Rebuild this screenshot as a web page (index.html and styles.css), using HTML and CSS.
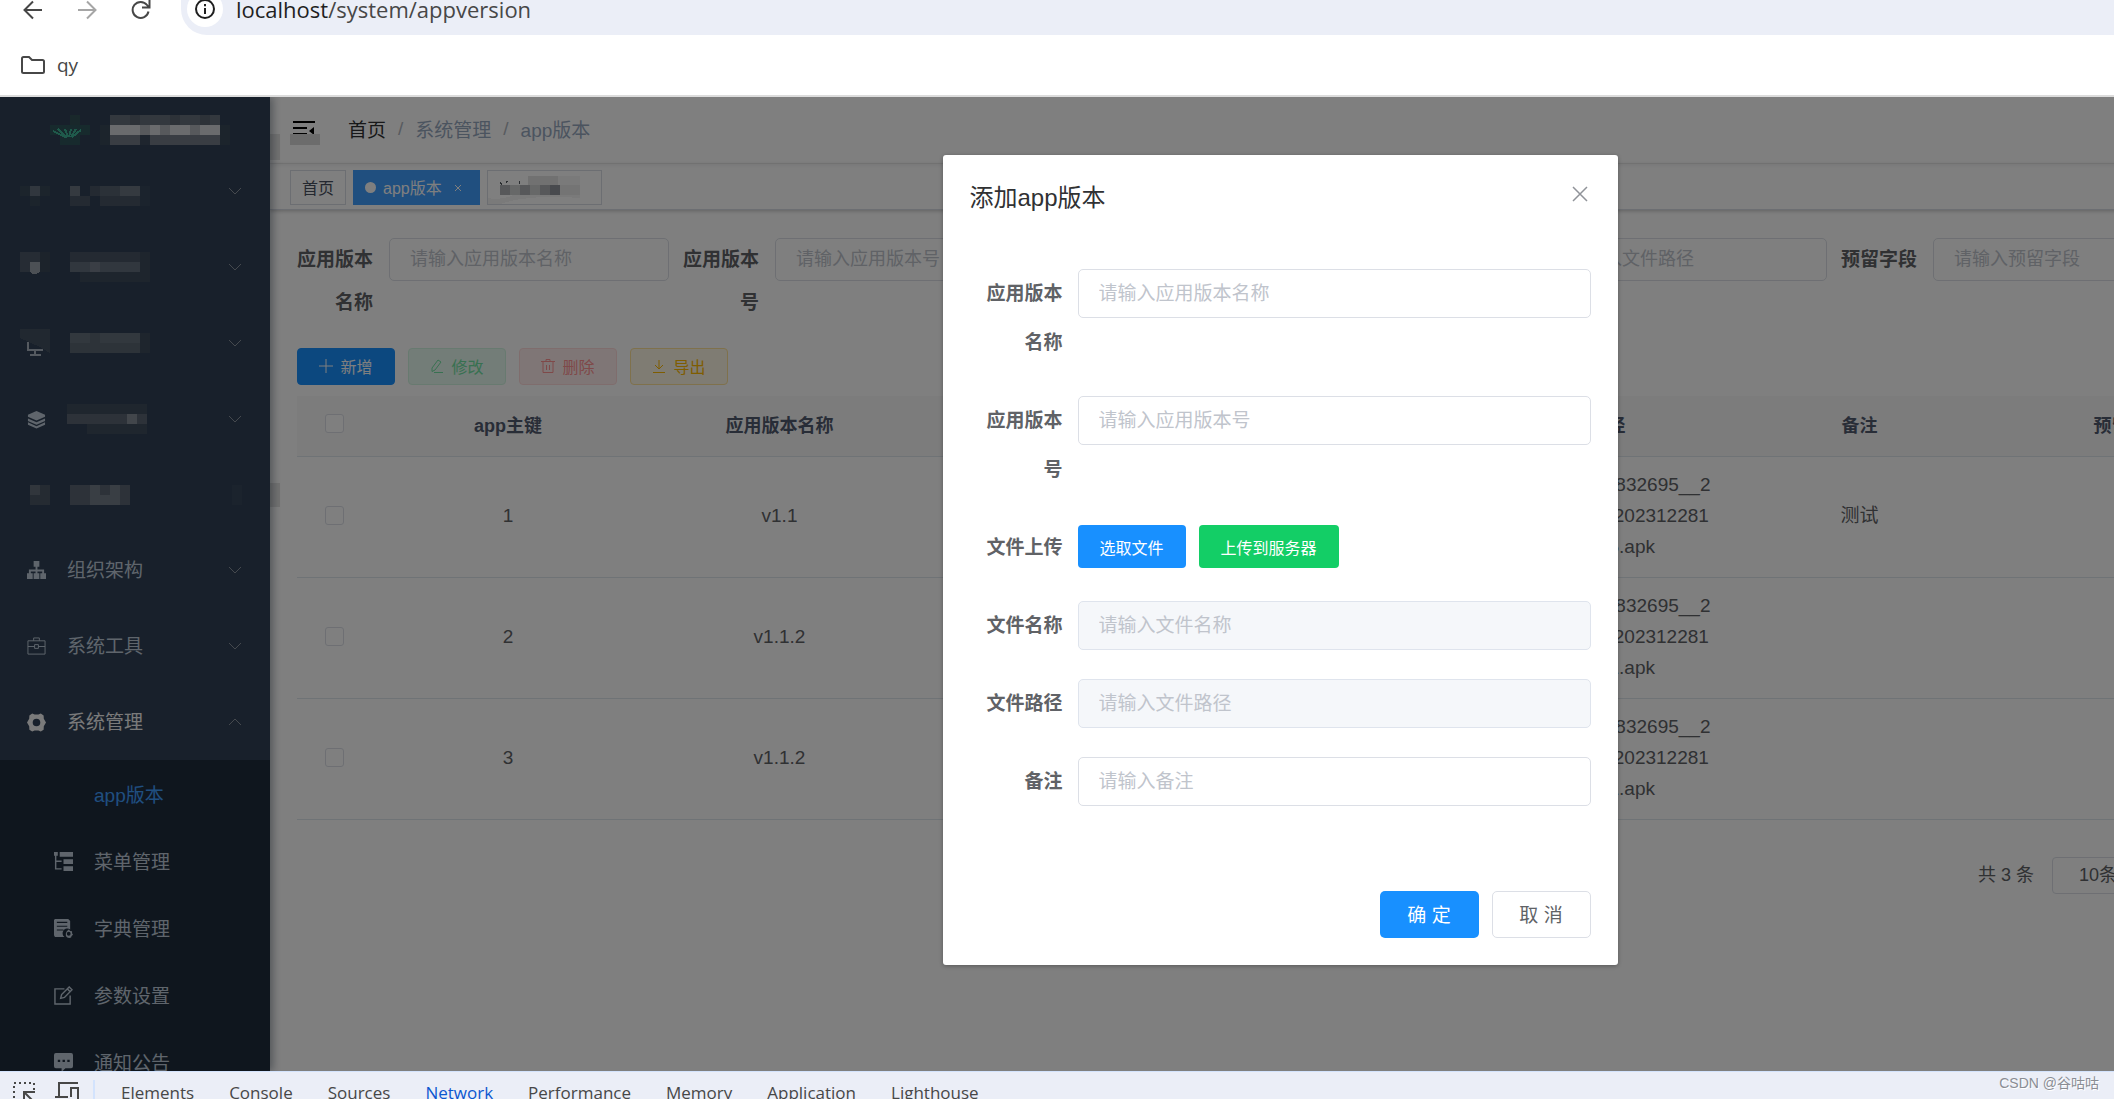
FILE: index.html
```html
<!DOCTYPE html>
<html lang="zh-CN">
<head>
<meta charset="utf-8">
<title>app版本</title>
<link rel="stylesheet" href="styles.css">
</head>
<body>
<header class="browser">
  <div class="toolbar">
    <button class="nav-btn" aria-label="Back"><svg viewBox="0 0 20 20" width="20" height="20"><path d="M19 10H2M10 1.500L1.500 10l8.500 8.500"/></svg></button>
    <button class="nav-btn nav-off" aria-label="Forward" disabled><svg viewBox="0 0 20 20" width="20" height="20"><path d="M1 10h17M10 1.500l8.500 8.500-8.500 8.500"/></svg></button>
    <button class="nav-btn" aria-label="Reload"><svg viewBox="0 0 20 20" width="20" height="20"><path d="M17.500 11.500A8 8 0 1 1 16 5l2 2.500M18.500 0v7.500H11"/></svg></button>
    <div class="address">
      <span class="site-info"><svg viewBox="0 0 22 22" width="22" height="22"><circle cx="11" cy="11" r="9"/><path d="M11 10v6M11 6v2.200"/></svg></span>
      <span class="url"><b>localhost</b>/system/appversion</span>
    </div>
  </div>
  <div class="bookmarks">
    <a class="bookmark" href="#"><svg viewBox="0 0 26 20" width="26" height="20"><path d="M2 3.500Q2 2 3.500 2H9l3 3h10.500Q24 5 24 6.500v10q0 1.500-1.500 1.500h-19Q2 18 2 16.500z"/></svg>qy</a>
  </div>
</header>

<div class="viewport">
<div class="app">
  <aside class="sidebar">
    <div class="logo">
      <svg class="mosaic" viewBox="0 0 40 30" width="40" height="30">
        <path fill="#325056" d="M20 0h10v10H20z"/><path fill="#2f5a5c" d="M0 10h40v10H0zM10 20h20v10H10z" opacity=".8"/>
        <path class="leaf" d="M3 16l12 6M8 14l9 9M15 14l3 8M21 14l-2 8M26 14l-5 8M31 15l-9 7"/>
      </svg>
      <svg class="mosaic" viewBox="0 0 130 30" width="130" height="30">
        <path fill="#66707c" d="M10 0h110v10H10z"/><path fill="#5a6470" d="M30 0h10v10H30zM70 0h10v10H70zM100 0h10v10h-10z"/>
        <path fill="#d4d6da" d="M10 10h110v10H10z"/><path fill="#aeb2b8" d="M40 10h10v10H40zM60 10h10v10H60zM90 10h10v10H90z"/>
        <path fill="#737b86" d="M10 20h110v10H10z"/><path fill="#3c4a5c" d="M40 20h10v10H40z"/><path fill="#384859" d="M0 10h10v20H0zM120 10h10v20h-10z"/>
      </svg>
    </div>
    <nav class="menu">
      <a class="item blurred" href="#" aria-label="菜单一">
        <svg class="mosaic" viewBox="0 -10 30 30" width="30" height="30"><path fill="#384859" d="M0 0h30v10H10v10h10V10H0z"/><path fill="#626e7c" d="M10 0h10v10H10z"/></svg>
        <svg class="mosaic" viewBox="0 0 80 30" width="80" height="30"><path fill="#566370" d="M20 10h50v10H20z"/><path fill="#485564" d="M20 10h10v10H20zM30 20h40v10H30zM0 20h20v10H0z"/><path fill="#6a7480" d="M0 10h10v10H0zM50 10h20v10H50z" transform="translate(0 0)"/><path fill="#36475a" d="M70 10h10v20H70z"/></svg>
        <svg class="chevron" viewBox="0 0 14 8"><path d="M1 1l6 6 6-6"/></svg></a>
      <a class="item blurred" href="#" aria-label="菜单二">
        <svg class="mosaic" viewBox="0 0 30 30" width="30" height="30"><path fill="#4c5968" d="M0 0h20v20H0z"/><path fill="#384757" d="M20 0h10v20H20z"/><path fill="#98a0aa" d="M10 10h10v10q-6 4-10 0z"/></svg>
        <svg class="mosaic" viewBox="0 0 80 30" width="80" height="30"><path fill="#485564" d="M0 0h80v20H0z"/><path fill="#626e7c" d="M0 10h70v10H0z"/><path fill="#747c8a" d="M20 10h10v10H20z"/><path fill="#3c4a5a" d="M10 20h70v10H10zM70 0h10v20H70z"/></svg>
        <svg class="chevron" viewBox="0 0 14 8"><path d="M1 1l6 6 6-6"/></svg></a>
      <a class="item blurred" href="#" aria-label="菜单三">
        <svg class="mosaic" viewBox="0 0 30 30" width="30" height="30"><path fill="#425060" d="M0 1h30v24l-10-6L0 10z"/><path fill="none" stroke="#aab4c0" stroke-width="1.500" d="M8 14v8h15M15 22v5M10 27h11"/></svg>
        <svg class="mosaic" viewBox="0 0 80 20" width="80" height="20"><path fill="#65707c" d="M0 0h70v10H0z"/><path fill="#5b6672" d="M0 10h70v10H0zM20 0h10v10H20z"/><path fill="#3c4a5a" d="M70 0h10v20H70z"/></svg>
        <svg class="chevron" viewBox="0 0 14 8"><path d="M1 1l6 6 6-6"/></svg></a>
      <a class="item blurred" href="#" aria-label="菜单四">
        <svg class="icon" viewBox="0 0 20 20"><path d="M10 1l9 4v2l-9 4-9-4V5z"/><path d="M1 9l9 4 9-4v2.500l-9 4-9-4zM1 13l9 4 9-4v2.500l-9 4-9-4z"/></svg>
        <svg class="mosaic" viewBox="0 0 80 30" width="80" height="30"><path fill="#3e4c5c" d="M0 0h80v10H0zM20 20h60v10H20z"/><path fill="#5b6572" d="M0 10h80v10H0z"/><path fill="#848c96" d="M60 10h10v10H60z"/></svg>
        <svg class="chevron" viewBox="0 0 14 8"><path d="M1 1l6 6 6-6"/></svg></a>
      <a class="item blurred" href="#" aria-label="菜单五">
        <svg class="mosaic" viewBox="0 0 30 20" width="30" height="20"><path fill="#626c78" d="M10 0h10v10H10z"/><path fill="#4a5664" d="M20 0h10v20H10V10h10z"/></svg>
        <svg class="mosaic" viewBox="0 0 80 20" width="80" height="20"><path fill="#5b6572" d="M0 0h60v20H0z"/><path fill="#737c88" d="M20 0h10v20H20zM40 0h10v20H30V10h10z"/></svg>
        <svg class="mosaic mosaic-end" viewBox="0 0 10 20" width="10" height="20"><path fill="#36475a" d="M0 0h10v20H0z"/></svg></a>
      <a class="item" href="#">
        <svg class="icon" viewBox="0 0 20 20"><path d="M7 0h6v6h-2v3h7v4h2v6h-6v-6h2v-2h-5v2h2v6H7v-6h2v-2H4v2h2v6H0v-6h2V9h7V6H7z"/></svg>
        <span class="name">组织架构</span><svg class="chevron" viewBox="0 0 14 8"><path d="M1 1l6 6 6-6"/></svg></a>
      <a class="item" href="#">
        <svg class="icon line thin" viewBox="0 0 20 20"><path d="M1 4h18v14H1zM7 4V1h6v3M1 10h7M12 10h7M8 8h4v4H8z"/></svg>
        <span class="name">系统工具</span><svg class="chevron" viewBox="0 0 14 8"><path d="M1 1l6 6 6-6"/></svg></a>
      <a class="item open" href="#">
        <svg class="icon" viewBox="0 0 20 20"><path fill-rule="evenodd" d="M5.500.500L8 1.500h4l2.500-1 3 2 .200 3.500L20 10l-2.300 4-.200 3.500-3 2-2.500-1H8l-2.500 1-3-2-.200-3.500L0 10l2.300-4 .200-3.500zM10 6a4 4 0 1 0 0 8 4 4 0 0 0 0-8z"/></svg>
        <span class="name">系统管理</span><svg class="chevron" viewBox="0 0 14 8"><path d="M1 7l6-6 6 6"/></svg></a>
      <div class="submenu">
        <a class="subitem current" href="#"><span class="icon"></span><span class="name">app版本</span></a>
        <a class="subitem" href="#"><svg class="icon" viewBox="0 0 20 20"><path d="M0 0h4v4H0zM6 0h14v5H6zM10 7.500h10v5H10zM10 15h10v5H10zM1 4h1.500v5H8v1.500H2.500V17H8v1.500H1z"/></svg><span class="name">菜单管理</span></a>
        <a class="subitem" href="#"><svg class="icon" viewBox="0 0 20 20"><path fill-rule="evenodd" d="M1 0h14l2 2v9a5 5 0 0 0-6 8H1L0 17V1zM3 3v1.200h11V3zM3 7v1.200h11V7zM3 11v1.200h7V11z"/><path fill-rule="evenodd" d="M15.500 11l1.500 1.500 2 .500v2l1 1.500-1.500 1.500-.500 1.500-2 .500-2-.500-1.500-1.500v-3l1-2zM15.500 13.500a2 2 0 1 0 0 4 2 2 0 0 0 0-4z"/></svg><span class="name">字典管理</span></a>
        <a class="subitem" href="#"><svg class="icon line" viewBox="0 0 20 20"><path d="M11 3H1v16h16v-9M7 13l1-4 8-8 3 3-8 8zM14 3l3 3"/></svg><span class="name">参数设置</span></a>
        <a class="subitem" href="#"><svg class="icon" viewBox="0 0 20 20"><path fill-rule="evenodd" d="M2 0h16q2 0 2 2v12q0 2-2 2h-6l-4 4v-4H2q-2 0-2-2V2q0-2 2-2zM4 7v2.500h2.500V7zM9 7v2.500h2.500V7zM14 7v2.500h2.500V7z"/></svg><span class="name">通知公告</span></a>
      </div>
    </nav>
  </aside>

  <main class="main">
    <div class="navbar">
      <button class="fold" aria-label="收起菜单"><svg viewBox="0 0 22 16" width="22" height="16"><path d="M0 0h22v2H0zM0 6h14v2H0zM0 12h14v2H0zM21 6v8l-5-4z"/></svg></button>
      <nav class="crumbs"><a href="#">首页</a><i>/</i><span>系统管理</span><i>/</i><span>app版本</span></nav>
    </div>
    <div class="tags">
      <a class="tag" href="#">首页</a>
      <a class="tag active" href="#"><span class="dot"></span>app版本<svg class="tag-x" viewBox="0 0 8 8" width="8" height="8"><path d="M1 1l6 6M7 1L1 7"/></svg></a>
      <a class="tag hidden-name" href="#" aria-label="标签"><svg class="mosaic" viewBox="0 0 106 33" width="106" height="33"><path fill="#f4f4f4" d="M0 27q18 4 38-10l30-12h24v22q-50-4-80 6H0z"/><path fill="#555a60" d="M12 11l2 2-1 1-2-2zM18 10h2l-2 3zM31 10h1v3h-1z"/><path fill="#e3e3e3" d="M40 5h30v9H40z"/><path fill="#cfd0d1" d="M12 14h60v10H12z"/><path fill="#aeb0b4" d="M12 14h10v10H12zM32 14h10v10H32zM52 14h10v10H52z"/><path fill="#90949c" d="M62 14h10v10H62z"/><path fill="#e8e8e8" d="M72 14h20v10H72z"/></svg></a>
    </div>

    <section class="content">
      <form class="query">
        <div class="field"><label for="q1">应用版本名称</label><input id="q1" placeholder="请输入应用版本名称"></div>
        <div class="field"><label for="q2">应用版本号</label><input id="q2" placeholder="请输入应用版本号"></div>
        <div class="field"><label for="q3">文件名称</label><input id="q3" placeholder="请输入文件名称"></div>
        <div class="field"><label for="q4">文件路径</label><input id="q4" placeholder="请输入文件路径"></div>
        <div class="field"><label for="q5">预留字段</label><input id="q5" placeholder="请输入预留字段"></div>
      </form>
      <div class="actions">
        <button class="btn add"><svg viewBox="0 0 14 14" width="14" height="14"><path d="M7 0v14M0 7h14"/></svg>新增</button>
        <button class="btn edit" disabled><svg viewBox="0 0 14 14" width="14" height="14"><path d="M2 9l6-8 3 2-6 8-3 1.500zM4 13.500h9"/></svg>修改</button>
        <button class="btn del" disabled><svg viewBox="0 0 14 14" width="14" height="14"><path d="M0 2.500h14M5 2.500v-2h4v2M2 2.500v11h10v-11M5.500 6v5M8.500 6v5"/></svg>删除</button>
        <button class="btn export"><svg viewBox="0 0 14 14" width="14" height="14"><path d="M7 1v9M3 6l4 4 4-4M1 13.500h12"/></svg>导出</button>
      </div>
      <table class="grid">
        <colgroup><col class="col-check"><col><col><col><col><col><col><col><col></colgroup>
        <thead><tr><th><input type="checkbox" aria-label="全选"></th><th>app主键</th><th>应用版本名称</th><th>应用版本号</th><th>文件名称</th><th>文件路径</th><th>备注</th><th>预留字段</th><th>操作</th></tr></thead>
        <tbody>
          <tr><td><input type="checkbox" aria-label="选择 1"></td><td>1</td><td>v1.1</td><td></td><td></td><td>/profile/20231703832695__2<br>UNI__20231228/202312281<br>202312285.apk</td><td>测试</td><td></td><td></td></tr>
          <tr><td><input type="checkbox" aria-label="选择 2"></td><td>2</td><td>v1.1.2</td><td></td><td></td><td>/profile/20231703832695__2<br>UNI__20231228/202312281<br>202312281.apk</td><td></td><td></td><td></td></tr>
          <tr><td><input type="checkbox" aria-label="选择 3"></td><td>3</td><td>v1.1.2</td><td></td><td></td><td>/profile/20231703832695__2<br>UNI__20231228/202312281<br>202312281.apk</td><td></td><td></td><td></td></tr>
        </tbody>
      </table>
      <div class="pager">
        <span class="total">共 3 条</span>
        <select aria-label="每页条数"><option>10条/页</option></select>
        <div class="pages"><button aria-label="上一页">‹</button><button>1</button><button aria-label="下一页">›</button></div>
        <label class="jump">前往 <input value="1"> 页</label>
      </div>
    </section>
    <span class="smudge smudge-top"></span>
    <span class="smudge smudge-fold"></span>
    <span class="smudge smudge-mid"></span>
  </main>

  <div class="mask">
    <form class="dialog" role="dialog" aria-labelledby="dlg-title">
      <div class="dialog-head">
        <h2 id="dlg-title">添加app版本</h2>
        <button type="button" class="close" aria-label="关闭"><svg viewBox="0 0 16 16" width="16" height="16"><path d="M1 1l14 14M15 1L1 15"/></svg></button>
      </div>
      <div class="dialog-body">
        <div class="row"><label for="f1">应用版本名称</label><input id="f1" placeholder="请输入应用版本名称"></div>
        <div class="row"><label for="f2">应用版本号</label><input id="f2" placeholder="请输入应用版本号"></div>
        <div class="row"><span class="row-label">文件上传</span><div class="uploads"><button type="button" class="pick">选取文件</button><button type="button" class="send">上传到服务器</button></div></div>
        <div class="row"><label for="f3">文件名称</label><input id="f3" placeholder="请输入文件名称" disabled></div>
        <div class="row"><label for="f4">文件路径</label><input id="f4" placeholder="请输入文件路径" disabled></div>
        <div class="row"><label for="f5">备注</label><input id="f5" placeholder="请输入备注"></div>
      </div>
      <div class="dialog-foot"><button type="button" class="ok">确 定</button><button type="button" class="cancel">取 消</button></div>
    </form>
  </div>
</div>
</div>

<footer class="devtools">
  <button class="tool" aria-label="Inspect"><svg viewBox="0 0 22 22" width="22" height="22"><path stroke-dasharray="2 3" d="M1 22V2h20v8"/><path d="M22 22L11 11M11 20v-9h11"/></svg></button>
  <button class="tool" aria-label="Device"><svg viewBox="0 0 24 22" width="24" height="22"><path d="M23 2H4v14H0M16 16V7h7v12h-7M13 16H0"/></svg></button>
  <nav class="panels"><a href="#">Elements</a><a href="#">Console</a><a href="#">Sources</a><a href="#" class="on">Network</a><a href="#">Performance</a><a href="#">Memory</a><a href="#">Application</a><a href="#">Lighthouse</a></nav>
  <span class="credit">CSDN @谷咕咕</span>
</footer>
</body>
</html>
```
FILE: styles.css
```css
* { box-sizing: border-box; }
html, body { height: 100%; margin: 0; }
body {
  display: flex; flex-direction: column; overflow: hidden; background: #fff;
  font-family: "Liberation Sans", "Noto Sans CJK SC", sans-serif; font-size: 19px; color: #606266;
}
a { color: inherit; text-decoration: none; }
button, input, select { font: inherit; margin: 0; }
button { padding: 0; border: 0; background: none; color: inherit; }
svg { display: block; flex: none; }

/* browser frame */
.browser { flex: none; border-bottom: 2px solid #dcdcdc; font-family: "Open Sans", "Noto Sans", sans-serif; color: #474747; }
.toolbar { display: flex; align-items: center; gap: 34px; height: 35px; padding: 0 0 0 23px; }
.nav-btn { margin-bottom: 16px; }
.nav-btn svg, .site-info svg, .bookmark svg { fill: none; stroke: #474747; stroke-width: 2; }
.nav-off svg { stroke: #a6a6a6; }
.address { flex: 1; display: flex; align-items: center; gap: 13px; height: 35px; margin-left: -4px; padding: 0 0 17px 6px; background: #ebeef7; border-radius: 0 0 0 26px; }
.site-info { display: flex; align-items: center; justify-content: center; width: 36px; height: 36px; border-radius: 18px; background: #fff; flex: none; }
.site-info svg { stroke: #1f1f1f; }
.url { font-size: 22px; line-height: 18px; }
.url b { font-weight: 400; color: #1f1f1f; }
.bookmarks { display: flex; align-items: center; height: 60px; padding-left: 20px; }
.bookmark { display: flex; align-items: center; gap: 11px; font-size: 19px; }

/* application shell */
.viewport { flex: 1; min-height: 0; overflow: hidden; }
.app { position: relative; display: flex; height: 100%; min-width: 2560px; }
.sidebar { position: relative; z-index: 1; flex: none; width: 270px; overflow: hidden; background: #304156; color: #bfcbd9; box-shadow: 3px 0 8px rgba(0, 21, 41, .35); }
.logo { display: flex; align-items: center; gap: 10px; height: 55px; padding: 11px 0 0 50px; }
.leaf { fill: none; stroke: #3fb497; stroke-width: 2; }
.item { display: flex; align-items: center; height: 76px; padding: 0 28px 0 20px; gap: 20px; }
.blurred { padding-top: 2px; }
.icon { width: 19px; height: 19px; flex: none; fill: currentColor; margin: 0 1px 0 7px; }
.line { fill: none; stroke: currentColor; stroke-width: 1.5; }
.thin { stroke-width: 1; }
.name { padding-bottom: 3px; }
.chevron { width: 14px; height: 8px; margin-left: auto; fill: none; stroke: #8a929c; stroke-width: 1; }
.mosaic { shape-rendering: crispEdges; }
.mosaic-end { margin-left: auto; }
.open { color: #f4f4f5; }
.submenu { padding-top: 1px; background: #1f2d3d; }
.subitem { display: flex; align-items: center; gap: 20px; height: 67px; padding-left: 47px; }
.current { color: #409eff; }

.main { position: relative; flex: 1; min-width: 0; background: #fff; }
.navbar { display: flex; align-items: center; gap: 33px; height: 67px; padding: 0 0 3px 23px; border-bottom: 1px solid #f0f0f0; box-shadow: 0 1px 4px rgba(0, 21, 41, .08); }
.fold svg { fill: #000; }
.crumbs { display: flex; align-items: center; color: #97a8be; }
.crumbs a { color: #303133; }
.crumbs i { margin: 0 12px; font-style: normal; color: #b0b6c0; }
.tags { display: flex; align-items: center; gap: 7px; height: 46px; padding: 1px 0 0 20px; border-bottom: 1px solid #d8dce5; box-shadow: 0 1px 4px rgba(0, 0, 0, .24); font-size: 16px; color: #495060; }
.tag { display: flex; align-items: center; height: 35px; padding: 0 11px; border: 1px solid #d8dce5; }
.active { background: #409eff; border-color: #409eff; color: #fff; }
.dot { width: 11px; height: 11px; margin-right: 7px; border-radius: 50%; background: #fff; }
.tag-x { margin: 2px 6px 0 12px; fill: none; stroke: #fff; }
.hidden-name { width: 115px; padding: 0; overflow: hidden; }

.content { padding: 28px 27px; }
.query { display: flex; gap: 14px; margin-bottom: 24px; }
.field { display: flex; align-items: flex-start; }
.field label { width: 92px; padding-right: 16px; line-height: 43px; text-align: right; font-weight: 700; }
.field input { width: 280px; height: 43px; font-size: 18px; }
.field input, .row input { padding: 0 20px; border: 1px solid #dcdfe6; border-radius: 5px; background: #fff; color: #606266; }
input::placeholder { color: #c0c4cc; opacity: 1; }
.actions { display: flex; gap: 13px; margin-bottom: 11px; }
.btn { display: flex; align-items: center; justify-content: center; gap: 7px; width: 98px; height: 37px; padding-bottom: 2px; border: 1px solid; border-radius: 4px; font-size: 16px; }
.btn svg { fill: none; stroke: currentColor; }
.add { background: #1890ff; border-color: #1890ff; color: #fff; }
.edit { background: #e7faf0; border-color: #d0f5e0; color: #71e2a3; }
.del { background: #ffeded; border-color: #ffdbdb; color: #ff9292; }
.export { background: #fff8e6; border-color: #ffe399; color: #ffba00; }

.grid { width: 100%; table-layout: fixed; border-collapse: collapse; }
.col-check { width: 76px; }
.grid th { height: 60px; padding: 0 0 4px; border-bottom: 1px solid #dfe6ec; background: #f8f8f9; color: #515a6e; font-size: 18px; }
.grid td { height: 121px; padding: 0 0 2px; border-bottom: 1px solid #dfe6ec; text-align: center; line-height: 31px; white-space: nowrap; }
.grid input { display: block; appearance: none; width: 19px; height: 19px; margin: 0 auto; border: 1px solid #dcdfe6; border-radius: 3px; background: #fff; }
.grid th:first-child, .grid td:first-child { padding-right: 2px; }
.grid th:nth-child(n+3), .grid td:nth-child(n+3) { padding-left: 3px; }
.pager { display: flex; align-items: center; justify-content: flex-end; gap: 14px; margin-top: 37px; font-size: 18px; }
.total { margin-right: 4px; padding-bottom: 4px; }
.pager select { width: 135px; height: 37px; padding: 0 0 0 26px; appearance: none; border: 1px solid #dcdfe6; border-radius: 4px; background: #fff; color: #606266; }
.pages { display: flex; gap: 7px; }
.pages button { width: 40px; height: 37px; background: #f4f4f5; }
.jump { width: 184px; white-space: nowrap; }
.jump input { width: 60px; height: 37px; border: 1px solid #dcdfe6; text-align: center; }

.smudge { position: absolute; background: #e4e4e4; }
.smudge-top { left: 0; top: 37px; width: 10px; height: 26px; }
.smudge-fold { left: 20px; top: 37px; width: 30px; height: 11px; background: #d8d8d8; }
.smudge-mid { left: 0; top: 386px; width: 10px; height: 24px; }

/* dialog */
.mask { position: absolute; inset: 0; z-index: 2; display: flex; justify-content: center; align-items: flex-start; padding-top: 58px; background: rgba(0, 0, 0, .5); }
.dialog { width: 675px; padding: 27px; border-radius: 3px; background: #fff; box-shadow: 0 1px 4px rgba(0, 0, 0, .3); }
.dialog-head { display: flex; align-items: flex-start; justify-content: space-between; height: 87px; }
.dialog-head h2 { margin: 0; font-size: 24px; font-weight: 400; line-height: 32px; color: #303133; }
.close { padding: 4px 3px; }
.close svg { fill: none; stroke: #909399; stroke-width: 1.5; }
.row { display: flex; align-items: flex-start; margin-bottom: 29px; }
.row label, .row-label { width: 108px; padding: 0 15px 0 14px; line-height: 49px; text-align: right; font-weight: 700; flex: none; }
.row input { flex: 1; min-width: 0; height: 49px; }
.row input:disabled { background: #f5f7fa; border-color: #dfe4ed; }
.uploads { display: flex; gap: 13px; padding-top: 2px; font-size: 16px; color: #fff; }
.uploads button { height: 43px; padding: 0 22px; border-radius: 4px; }
.pick, .ok { background: #1890ff; }
.send { background: #13ce66; }
.dialog-foot { display: flex; justify-content: flex-end; gap: 13px; padding-top: 56px; }
.dialog-foot button { width: 99px; height: 47px; padding-bottom: 2px; border-radius: 5px; }
.dialog-foot .ok { color: #fff; }
.dialog-foot .cancel { border: 1px solid #dcdfe6; }

/* developer tools strip */
.devtools { flex: none; display: flex; align-items: flex-start; height: 28px; overflow: hidden; padding: 0 15px 0 13px; border-top: 1px solid #d3e3fd; background: #ebeef7; font: 17px "Open Sans", "Noto Sans", sans-serif; color: #474747; }
.tool { margin: 9px 20px 0 0; }
.tool + .tool { margin-right: 14px; }
.tool svg { fill: none; stroke: #474747; stroke-width: 2; }
.panels { display: flex; gap: 35px; margin-top: 8px; padding-left: 26px; border-left: 2px solid #d3e3fd; line-height: 26px; }
.on { color: #0b57d0; }
.credit { margin-left: auto; font: 14px/22px "Liberation Sans", "Noto Sans CJK SC", sans-serif; color: #8a8d94; text-shadow: 1px 1px 0 #fff; }
```
